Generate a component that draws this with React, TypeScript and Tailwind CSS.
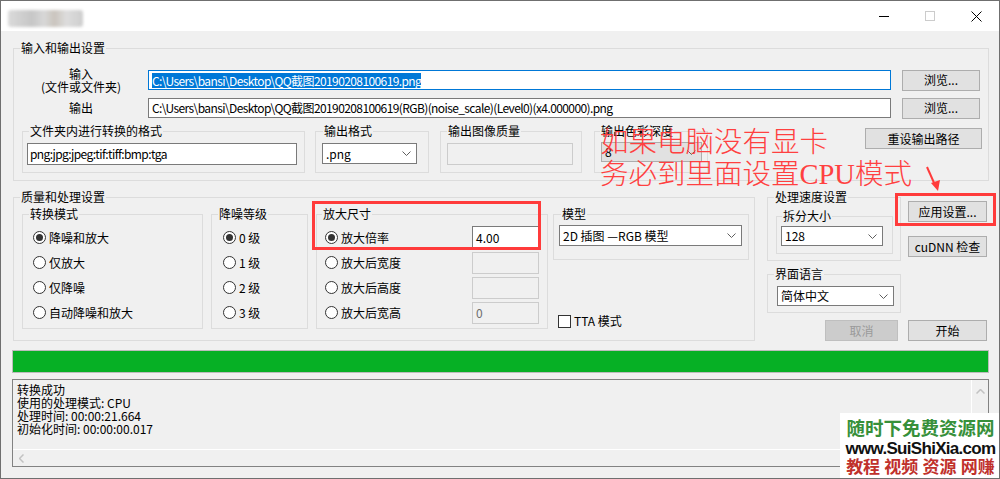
import React from "react";

function Legend({ children, className = "ml-[6px]" }: { children: React.ReactNode; className?: string }) {
  return <legend className={"h-[16px] px-px leading-[16px] whitespace-nowrap " + className}>{children}</legend>;
}

function Chevron() {
  return (
    <svg width="9" height="5" viewBox="0 0 9 5" className="shrink-0">
      <path d="M0.5 0.5 L4.5 4.5 L8.5 0.5" fill="none" stroke="#5f5f5f" strokeWidth="1" />
    </svg>
  );
}

function Btn({ children, className = "", disabled = false }: { children: React.ReactNode; className?: string; disabled?: boolean }) {
  return (
    <div
      className={
        "flex items-center justify-center border whitespace-nowrap " +
        (disabled ? "border-[#bfbfbf] bg-[#cccccc] text-[#9a9a9a]" : "border-[#adadad] bg-[#e1e1e1]") +
        " " +
        className
      }
    >
      {children}
    </div>
  );
}

function Select({ children, className = "", disabled = false }: { children: React.ReactNode; className?: string; disabled?: boolean }) {
  return (
    <div
      className={
        "flex items-center justify-between border pl-[3px] pr-[5px] " +
        (disabled ? "border-[#adadad] bg-[#e1e1e1]" : "border-[#7a7a7a] bg-white") +
        " " +
        className
      }
    >
      <span className="whitespace-nowrap">{children}</span>
      <Chevron />
    </div>
  );
}

function Radio({ checked = false }: { checked?: boolean }) {
  return (
    <span className="flex h-[13px] w-[13px] shrink-0 items-center justify-center rounded-full border border-[#333333] bg-white">
      {checked && <span className="h-[7px] w-[7px] rounded-full bg-[#333333]" />}
    </span>
  );
}

function RadioRow({ checked = false, label, className = "" }: { checked?: boolean; label: string; className?: string }) {
  return (
    <div className={"flex h-[25px] items-center " + className}>
      <Radio checked={checked} />
      <span className="ml-[3px] whitespace-nowrap">{label}</span>
    </div>
  );
}

export default function App() {
  return (
    <div className="relative h-[479px] w-[1000px] overflow-hidden border border-[#6f6f6f] bg-[#f0f0f0] font-['Noto_Sans_CJK_SC',sans-serif] text-[12px] leading-[16px] text-black">
      {/* Title bar */}
      <div className="flex h-[30px] bg-white">
        <div className="ml-[7px] mt-[9px] h-[17px] w-[75px] rounded-[3px] bg-[linear-gradient(90deg,#dadada_0%,#cfcfcf_18%,#c6c6c6_32%,#d8d8d8_48%,#cac4bd_62%,#dddddd_78%,#cdcdcd_100%)] blur-[1.5px]" />
        <div className="ml-auto flex">
          <div className="flex h-[30px] w-[46px] items-center justify-center">
            <svg width="10" height="10" viewBox="0 0 10 10">
              <path d="M0 5.5 H10" stroke="#000" strokeWidth="1" />
            </svg>
          </div>
          <div className="flex h-[30px] w-[46px] items-center justify-center">
            <svg width="10" height="10" viewBox="0 0 10 10">
              <rect x="0.5" y="0.5" width="9" height="9" fill="none" stroke="#cccccc" strokeWidth="1" />
            </svg>
          </div>
          <div className="flex h-[30px] w-[46px] items-center justify-center">
            <svg width="11" height="11" viewBox="0 0 11 11">
              <path d="M0.5 0.5 L10.5 10.5 M10.5 0.5 L0.5 10.5" stroke="#000" strokeWidth="1" />
            </svg>
          </div>
        </div>
      </div>

      {/* Body */}
      <div className="pl-[12px]">
        {/* 输入和输出设置 */}
        <fieldset className="mt-[9px] w-[976px] border border-[#dcdcdc] pb-[7px]">
          <Legend>输入和输出设置</Legend>
          <div className="mt-[10px] flex h-[28px] items-center">
            <div className="flex w-[134px] flex-col items-center leading-[13px]">
              <span>输入</span>
              <span>(文件或文件夹)</span>
            </div>
            <div className="flex h-[20px] w-[743px] items-center overflow-hidden whitespace-nowrap border border-[#0078d7] bg-white pl-[3px]">
              <span className="bg-[#0078d7] leading-[15px] tracking-[-0.6px] text-white">C:\Users\bansi\Desktop\QQ截图20190208100619.png</span>
            </div>
            <Btn className="ml-[11px] h-[21px] w-[78px]">浏览...</Btn>
          </div>
          <div className="mt-[4px] flex h-[20px] items-center">
            <div className="flex w-[134px] justify-center">输出</div>
            <div className="flex h-[20px] w-[743px] items-center overflow-hidden whitespace-nowrap border border-[#7a7a7a] bg-white pl-[3px] tracking-[-0.6px]">
              C:\Users\bansi\Desktop\QQ截图20190208100619(RGB)(noise_scale)(Level0)(x4.000000).png
            </div>
            <Btn className="ml-[11px] h-[21px] w-[78px]">浏览...</Btn>
          </div>
          <div className="mt-[5px] flex">
            <fieldset className="ml-[8px] w-[283px] border border-[#dcdcdc] pb-[7px]">
              <Legend>文件夹内进行转换的格式</Legend>
              <div className="ml-[4px] mt-[4px] flex h-[22px] w-[270px] items-center border border-[#7a7a7a] bg-white pl-[2px] tracking-[-0.6px]">
                png:jpg:jpeg:tif:tiff:bmp:tga
              </div>
            </fieldset>
            <fieldset className="ml-[10px] w-[114px] border border-[#dcdcdc] pb-[7px]">
              <Legend className="ml-[7px]">输出格式</Legend>
              <Select className="ml-[6px] mt-[4px] h-[21px] w-[95px]">.png</Select>
            </fieldset>
            <fieldset className="ml-[11px] w-[142px] border border-[#dcdcdc] pb-[7px]">
              <Legend className="ml-[6px]">输出图像质量</Legend>
              <div className="ml-[6px] mt-[4px] h-[22px] w-[126px] border border-[#cccccc] bg-[#f0f0f0]" />
            </fieldset>
            <fieldset className="ml-[12px] w-[114px] border border-[#dcdcdc] pb-[7px]">
              <Legend className="ml-[5px]">输出色彩深度</Legend>
              <Select disabled className="ml-[6px] mt-[3px] h-[20px] w-[101px]">8</Select>
            </fieldset>
            <Btn className="ml-[157px] mt-[5px] h-[21px] w-[117px] self-start">重设输出路径</Btn>
          </div>
        </fieldset>

        {/* Second row */}
        <div className="mt-[8px] flex items-start">
          <fieldset className="w-[742px] border border-[#dcdcdc] pb-[11px]">
            <Legend>质量和处理设置</Legend>
            <div className="mt-[1px] flex">
              <fieldset className="ml-[8px] w-[181px] border border-[#dcdcdc] pb-[3px]">
                <Legend>转换模式</Legend>
                <div className="mt-[3px] flex flex-col pl-[10px]">
                  <RadioRow checked label="降噪和放大" />
                  <RadioRow label="仅放大" />
                  <RadioRow label="仅降噪" />
                  <RadioRow label="自动降噪和放大" />
                </div>
              </fieldset>
              <fieldset className="ml-[8px] w-[97px] border border-[#dcdcdc] pb-[3px]">
                <Legend>降噪等级</Legend>
                <div className="mt-[3px] flex flex-col pl-[11px]">
                  <RadioRow checked label="0 级" />
                  <RadioRow label="1 级" />
                  <RadioRow label="2 级" />
                  <RadioRow label="3 级" />
                </div>
              </fieldset>
              <fieldset className="ml-[8px] w-[232px] border border-[#dcdcdc] pb-[3px]">
                <Legend className="ml-[5px]">放大尺寸</Legend>
                <div className="mt-[3px] flex flex-col pl-[8px] pr-[8px]">
                  <div className="flex h-[25px] items-center">
                    <Radio checked />
                    <span className="ml-[3px]">放大倍率</span>
                    <div className="ml-auto flex h-[23px] w-[67px] items-center border border-[#7a7a7a] bg-white pl-[3px]">4.00</div>
                  </div>
                  <div className="flex h-[25px] items-center">
                    <Radio />
                    <span className="ml-[3px]">放大后宽度</span>
                    <div className="ml-auto h-[22px] w-[67px] border border-[#cccccc] bg-[#f0f0f0]" />
                  </div>
                  <div className="flex h-[25px] items-center">
                    <Radio />
                    <span className="ml-[3px]">放大后高度</span>
                    <div className="ml-auto h-[22px] w-[67px] border border-[#cccccc] bg-[#f0f0f0]" />
                  </div>
                  <div className="flex h-[25px] items-center">
                    <Radio />
                    <span className="ml-[3px]">放大后宽高</span>
                    <div className="ml-auto flex h-[22px] w-[67px] items-center border border-[#cccccc] bg-[#f0f0f0] pl-[3px] text-[#6d6d6d]">0</div>
                  </div>
                </div>
              </fieldset>
              <div className="ml-[5px] flex w-[196px] flex-col">
                <fieldset className="border border-[#dcdcdc] pb-[13px]">
                  <Legend className="ml-[7px]">模型</Legend>
                  <Select className="ml-[5px] mt-[3px] h-[21px] w-[183px]">2D 插图 —RGB 模型</Select>
                </fieldset>
                <div className="ml-[5px] mt-[53px] flex h-[16px] items-center">
                  <span className="h-[13px] w-[13px] border border-[#333333] bg-white" />
                  <span className="ml-[3px]">TTA 模式</span>
                </div>
              </div>
            </div>
          </fieldset>

          <div className="ml-[12px] flex w-[134px] flex-col">
            <fieldset className="border border-[#dcdcdc] pb-[6px]">
              <Legend>处理速度设置</Legend>
              <fieldset className="ml-[8px] mt-[3px] w-[117px] border border-[#dcdcdc] pb-[7px]">
                <Legend className="ml-[5px]">拆分大小</Legend>
                <Select className="ml-[4px] mt-[2px] h-[20px] w-[102px]">128</Select>
              </fieldset>
            </fieldset>
            <fieldset className="mt-[5px] border border-[#dcdcdc] pb-[6px]">
              <Legend>界面语言</Legend>
              <Select className="ml-[9px] mt-[4px] h-[20px] w-[117px]">简体中文</Select>
            </fieldset>
            <Btn disabled className="mr-[3px] mt-[7px] h-[21px] w-[73px] self-end">取消</Btn>
          </div>

          <div className="ml-[7px] flex w-[79px] flex-col">
            <Btn className="mt-[12px] h-[21px]">应用设置...</Btn>
            <Btn className="mt-[14px] h-[21px]">cuDNN 检查</Btn>
            <Btn className="mt-[63px] h-[21px]">开始</Btn>
          </div>
        </div>

        {/* Progress */}
        <div className="-ml-px mt-[9px] h-[23px] w-[977px] border border-[#bcbcbc] bg-[#e6e6e6]">
          <div className="h-full w-full bg-[#06b025]" />
        </div>

        {/* Log */}
        <div className="-ml-px mt-[6px] grid h-[88px] w-[977px] grid-cols-[1fr_17px] grid-rows-[1fr_17px] border border-[#828282] bg-[#f0f0f0]">
          <div className="pl-[4px] pt-[3px] leading-[13px]">
            <div>转换成功</div>
            <div>使用的处理模式: CPU</div>
            <div>处理时间: 00:00:21.664</div>
            <div>初始化时间: 00:00:00.017</div>
          </div>
          <div className="flex justify-center border-l border-white pt-[9px]">
            <svg width="9" height="5" viewBox="0 0 9 5">
              <path d="M0.5 4.5 L4.5 0.5 L8.5 4.5" fill="none" stroke="#c2c2c2" strokeWidth="1.5" />
            </svg>
          </div>
          <div className="flex items-center border-t border-white pl-[6px]">
            <svg width="5" height="9" viewBox="0 0 5 9">
              <path d="M4.5 0.5 L0.5 4.5 L4.5 8.5" fill="none" stroke="#c2c2c2" strokeWidth="1.5" />
            </svg>
          </div>
          <div className="border-t border-white" />
        </div>
      </div>

      {/* Red annotations */}
      <div className="pointer-events-none absolute left-[311px] top-[200px] h-[49px] w-[229px] border-[3px] border-[#ff3b3b]" />
      <div className="pointer-events-none absolute left-[894px] top-[192px] h-[33px] w-[101px] border-[3px] border-[#ff3b3b]" />
      <div className="pointer-events-none absolute left-[599px] top-[126px] whitespace-nowrap font-['Liberation_Serif','Noto_Sans_CJK_SC',serif] text-[28.5px] font-light leading-[32px] text-[#ff4040]">
        <div>如果电脑没有显卡</div>
        <div>务必到里面设置CPU模式</div>
      </div>
      <svg className="pointer-events-none absolute left-[919px] top-[163px]" width="24" height="30" viewBox="0 0 24 30">
        <path d="M7 3 L15 21" stroke="#ff3b3b" strokeWidth="2" />
        <path d="M11 19 L20 16 L18 27 Z" fill="#ff3b3b" />
      </svg>

      {/* Watermark */}
      <div className="absolute left-[839px] top-[412px] flex h-[66px] w-[161px] flex-col items-center bg-white pt-[3px]">
        <div className="text-[18.5px] font-bold leading-[22px] text-[#37903a]">随时下免费资源网</div>
        <div className="mt-[2px] font-['Liberation_Sans',sans-serif] text-[17px] font-bold leading-[18px] tracking-[-0.7px] text-[#111]">www.SuiShiXia.com</div>
        <div className="whitespace-pre font-['Liberation_Serif','Noto_Sans_CJK_SC',serif] text-[17px] font-bold leading-[20px] text-[#c0302b]">教程 视频 资源 网赚</div>
      </div>
    </div>
  );
}
